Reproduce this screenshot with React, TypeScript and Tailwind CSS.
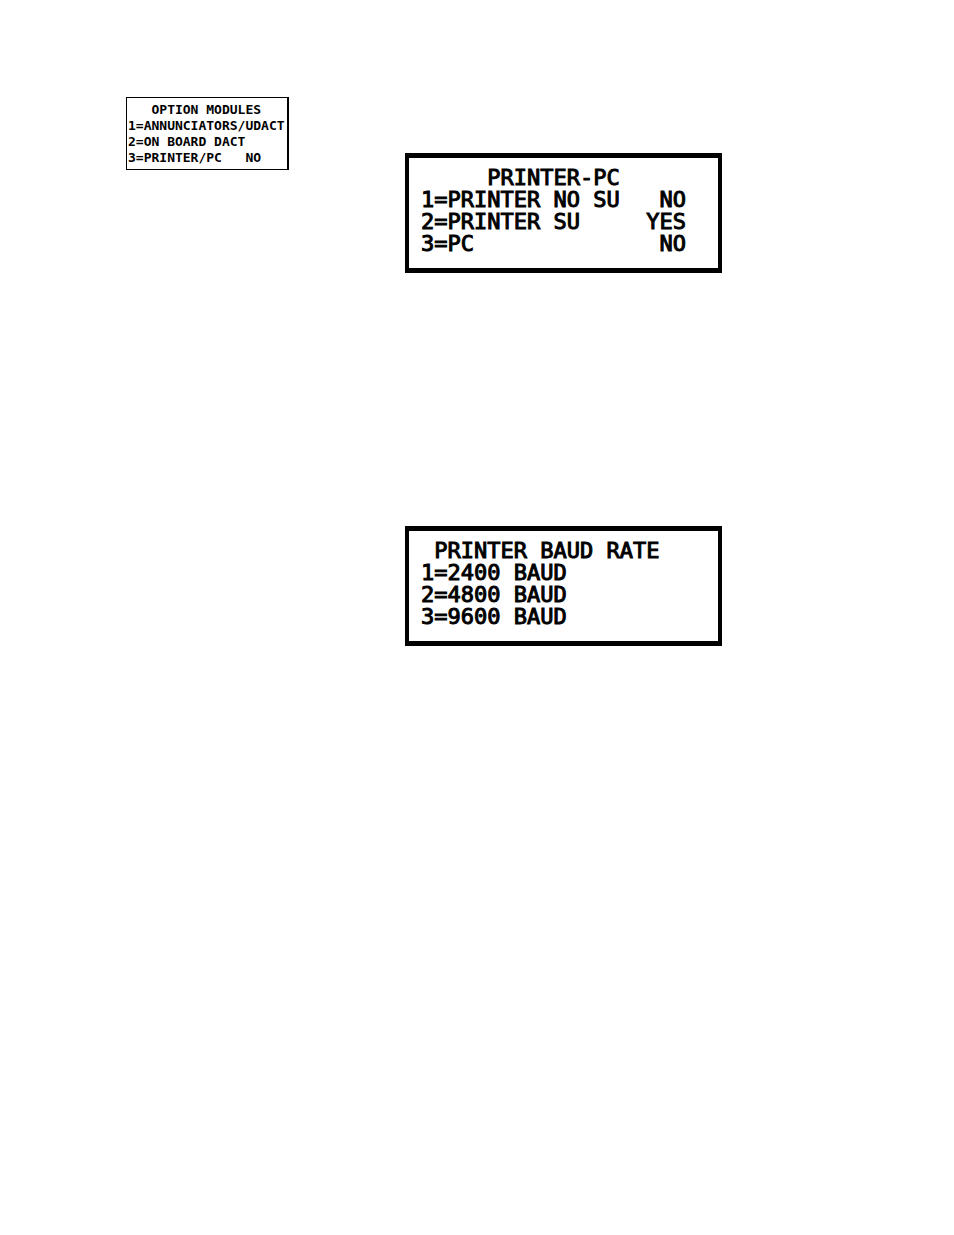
const OPTION_LINES = [
  "   OPTION MODULES",
  "1=ANNUNCIATORS/UDACT",
  "2=ON BOARD DACT",
  "3=PRINTER/PC   NO",
];

const PRINTER_PC_LINES = [
  "     PRINTER-PC",
  "1=PRINTER NO SU   NO",
  "2=PRINTER SU     YES",
  "3=PC              NO",
];

const BAUD_RATE_LINES = [
  " PRINTER BAUD RATE",
  "1=2400 BAUD",
  "2=4800 BAUD",
  "3=9600 BAUD",
];

const Lines = ({ lines }: { lines: string[] }) => (
  <>
    {lines.map((line) => (
      <p key={line} className="whitespace-pre">
        {line}
      </p>
    ))}
  </>
);

const MenuScreen = ({ lines }: { lines: string[] }) => (
  <section className="w-full max-w-[317px] border-x-4 border-y-5 border-black pl-3 pt-[9px] pb-[13px] text-[22px] leading-[22px] [-webkit-text-stroke:1px_black]">
    <Lines lines={lines} />
  </section>
);

const App = () => {
  return (
    <main className="min-h-screen bg-white px-[126px] pt-[97px] font-['DejaVu_Sans_Mono',monospace] text-black">
      <div className="flex items-start gap-[116px]">
        <section className="w-[163px] shrink-0 border border-r-2 border-black pl-px pt-1 pb-[3px] text-[13px] leading-4 font-bold">
          <Lines lines={OPTION_LINES} />
        </section>

        <div className="flex grow flex-col gap-[253px] pt-14">
          <MenuScreen lines={PRINTER_PC_LINES} />
          <MenuScreen lines={BAUD_RATE_LINES} />
        </div>
      </div>
    </main>
  );
};

export default App;
